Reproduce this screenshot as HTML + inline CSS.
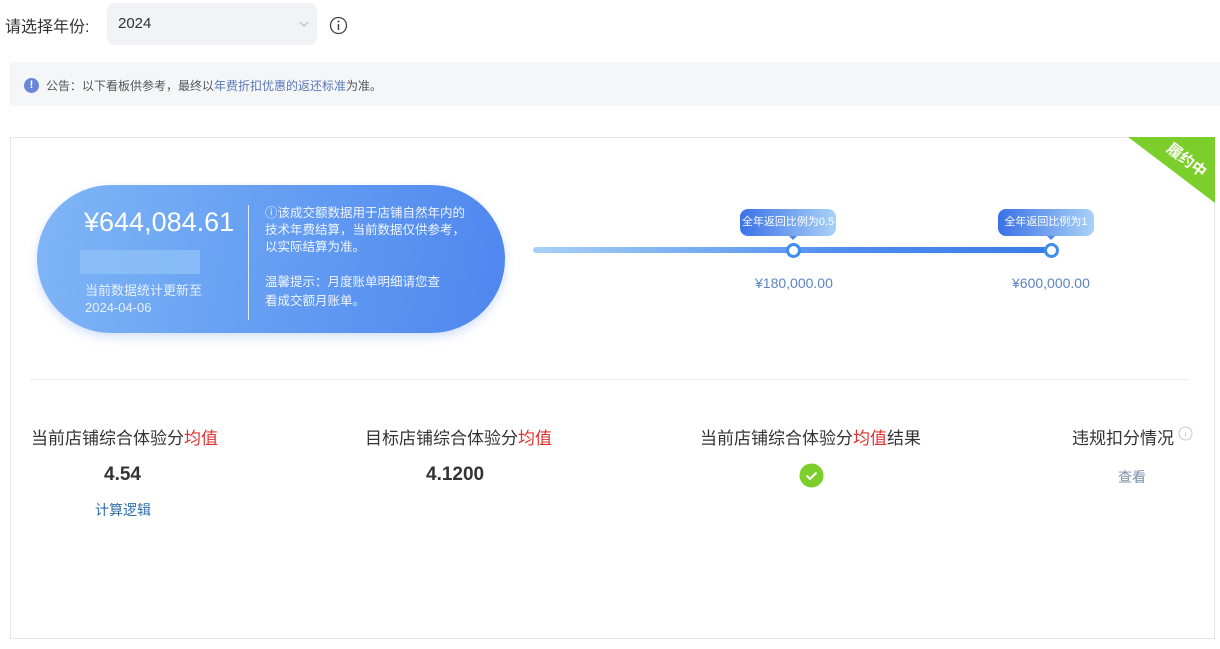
<!DOCTYPE html>
<html><head><meta charset="utf-8"><style>
*{margin:0;padding:0;box-sizing:border-box}
body{width:1220px;height:649px;background:#fff;font-family:"Liberation Sans","Noto Sans CJK SC",sans-serif;position:relative;overflow:hidden;color:#333}
.a{position:absolute}
</style></head><body>
<div class="a" style="left:5px;top:13px;font-size:16px;color:#333">请选择年份:</div>
<div class="a" style="left:107px;top:3px;width:210px;height:42px;background:#f2f3f7;border-radius:8px"></div>
<div class="a" style="left:118px;top:15px;font-size:15px;color:#333">2024</div>
<svg class="a" style="left:298px;top:20px" width="12" height="8"><path d="M2 2l4 4 4-4" stroke="#bbb" fill="none" stroke-width="1.2"/></svg>
<svg class="a" style="left:329px;top:16px" width="19" height="19"><circle cx="9.5" cy="9.5" r="8" stroke="#444" fill="none" stroke-width="1.3"/><path d="M9.5 8v6" stroke="#444" stroke-width="1.5"/><circle cx="9.5" cy="5.5" r="1" fill="#444"/></svg>
<div class="a" style="left:10px;top:62px;width:1210px;height:44px;background:#f5f6f8"></div>
<div class="a" style="left:24px;top:78px;width:15px;height:15px;border-radius:50%;background:#6b86d6;color:#fff;font-size:11px;text-align:center;line-height:15px;font-weight:bold">!</div>
<div class="a" style="left:46px;top:77px;font-size:12px;color:#555">公告：以下看板供参考，最终以<span style="color:#5b78b8">年费折扣优惠的返还标准</span>为准。</div>
<div class="a" style="left:10px;top:137px;width:1205px;height:502px;border:1px solid #e6e6e6"></div>
<svg class="a" style="left:1128px;top:137px" width="87" height="66"><polygon points="0,0 87,0 87,66" fill="#7ccf2b"/><text x="58" y="28" fill="#fff" font-size="15" font-weight="bold" transform="rotate(37 58 24)" text-anchor="middle" font-family="Noto Sans CJK SC">履约中</text></svg>
<div class="a" style="left:37px;top:185px;width:468px;height:148px;border-radius:74px;background:linear-gradient(100deg,#80b6f6 0%,#6aa3f3 40%,#4e86ef 100%);box-shadow:0 4px 10px rgba(80,130,230,.25)"></div>
<div class="a" style="left:84px;top:207px;font-size:27px;color:#fff">¥644,084.61</div>
<div class="a" style="left:80px;top:250px;width:120px;height:24px;background:#8ec0f8;opacity:.8"></div>
<div class="a" style="left:85px;top:282px;font-size:13px;color:#e6f0ff;line-height:17px">当前数据统计更新至<br>2024-04-06</div>
<div class="a" style="left:248px;top:205px;width:1px;height:115px;background:rgba(255,255,255,.8)"></div>
<div class="a" style="left:265px;top:205px;font-size:12.5px;color:#f0f5ff;line-height:17px;width:210px">ⓘ该成交额数据用于店铺自然年内的<br>技术年费结算，当前数据仅供参考，<br>以实际结算为准。</div>
<div class="a" style="left:265px;top:273px;font-size:12.5px;color:#f0f5ff;line-height:19px;width:185px">温馨提示：月度账单明细请您查<br>看成交额月账单。</div>
<div class="a" style="left:533px;top:247px;width:519px;height:6px;border-radius:3px;background:linear-gradient(90deg,#a8d0f6,#4d8df0 60%,#3a7be8)"></div>
<div class="a" style="left:786px;top:243px;width:15px;height:15px;border-radius:50%;background:#fff;border:3px solid #3d8ef0"></div>
<div class="a" style="left:1044px;top:243px;width:15px;height:15px;border-radius:50%;background:#fff;border:3px solid #3d8ef0"></div>
<div class="a" style="left:740px;top:209px;width:96px;height:27px;border-radius:8px;background:linear-gradient(90deg,#3a72e6,#a9d2f7);color:#fff;font-size:11px;line-height:27px;text-align:center">全年返回比例为0.5</div>
<div class="a" style="left:998px;top:209px;width:96px;height:27px;border-radius:8px;background:linear-gradient(90deg,#3a72e6,#a9d2f7);color:#fff;font-size:11px;line-height:27px;text-align:center">全年返回比例为1</div>
<div class="a" style="left:789px;top:236px;border:4px solid transparent;border-top-color:#4b86ec"></div>
<div class="a" style="left:1047px;top:236px;border:4px solid transparent;border-top-color:#4b86ec"></div>
<div class="a" style="left:755px;top:275px;font-size:14px;color:#5b83c4">¥180,000.00</div>
<div class="a" style="left:1012px;top:275px;font-size:14px;color:#5b83c4">¥600,000.00</div>
<div class="a" style="left:30px;top:379px;width:1158px;height:1px;background:#ebebeb"></div>
<div class="a" style="left:31px;top:424px;font-size:17px;color:#333">当前店铺综合体验分<span style="color:#e03030">均值</span></div>
<div class="a" style="left:365px;top:424px;font-size:17px;color:#333">目标店铺综合体验分<span style="color:#e03030">均值</span></div>
<div class="a" style="left:700px;top:424px;font-size:17px;color:#333">当前店铺综合体验分<span style="color:#e03030">均值</span>结果</div>
<div class="a" style="left:1072px;top:424px;font-size:17px;color:#333">违规扣分情况</div>
<svg class="a" style="left:1178px;top:426px" width="15" height="15"><circle cx="7.5" cy="7.5" r="6.5" stroke="#ccc" fill="none"/><path d="M7.5 6.5v4" stroke="#ccc"/></svg>
<div class="a" style="left:104px;top:464px;font-size:19px;font-weight:bold;color:#333">4.54</div>
<div class="a" style="left:426px;top:464px;font-size:19px;font-weight:bold;color:#333">4.1200</div>
<div class="a" style="left:95px;top:500px;font-size:14px;color:#2f6ea8">计算逻辑</div>
<svg class="a" style="left:799px;top:463px" width="25" height="25"><circle cx="12.5" cy="12.5" r="12" fill="#7ccf2b"/><path d="M7.5 12.5l3.5 3.5 6.5-6.5" stroke="#fff" stroke-width="2" fill="none"/></svg>
<div class="a" style="left:1118px;top:467px;font-size:14px;color:#7d8fa8">查看</div>
</body></html>
